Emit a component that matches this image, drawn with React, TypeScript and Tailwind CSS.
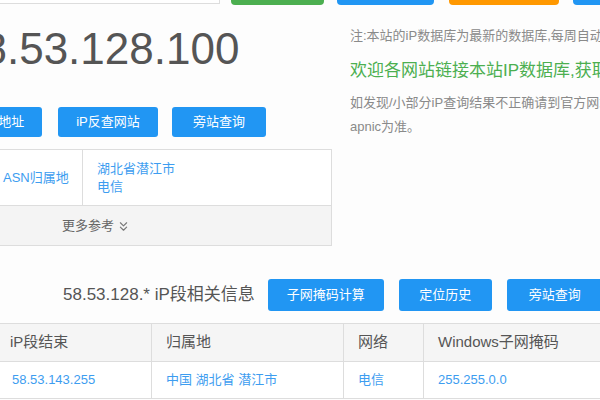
import { ChevronsDown } from "lucide-react";

const font = "font-['Liberation_Sans','Noto_Sans_CJK_SC',sans-serif]";

function Btn({ children, className = "" }: { children: React.ReactNode; className?: string }) {
  return (
    <div
      className={`flex items-center justify-center shrink-0 rounded-[3px] bg-[#2196f3] text-white text-[13px] whitespace-nowrap ${className}`}
    >
      {children}
    </div>
  );
}

export default function App() {
  const rows = [
    { end: "58.53.143.255", loc: "中国 湖北省 潜江市", net: "电信", mask: "255.255.0.0" },
  ];

  return (
    <div className={`w-[600px] h-[400px] overflow-hidden bg-[#fdfdfd] ${font}`}>
      {/* top bar remnants */}
      <div className="flex h-[5px] items-start">
        <div className="w-[220px] h-[4px] shrink-0 border-b border-r border-[#dddddd] bg-white" />
        <div className="ml-[11px] w-[93px] h-[5px] shrink-0 rounded-b-[4px] bg-[#4caf50]" />
        <div className="ml-[13px] w-[97px] h-[5px] shrink-0 rounded-b-[4px] bg-[#2196f3]" />
        <div className="ml-[15px] w-[110px] h-[5px] shrink-0 rounded-b-[4px] bg-[#ff9800]" />
        <div className="ml-[14px] w-[60px] h-[5px] shrink-0 rounded-bl-[4px] bg-[#2196f3]" />
      </div>

      <div className="flex">
        {/* left column */}
        <div className="w-[332px] shrink-0">
          <div className="mt-[22px] ml-[-42px] text-[44px] leading-[44px] text-[#555] whitespace-nowrap">
            58.53.128.100
          </div>

          <div className="mt-[36px] flex h-[30px]">
            <Btn className="ml-[-58px] w-[100px]">本机IP地址</Btn>
            <Btn className="ml-[16px] w-[100px]">iP反查网站</Btn>
            <Btn className="ml-[14px] w-[94px]">旁站查询</Btn>
          </div>

          <div className="mt-[12px] ml-[-139px] w-[471px] border border-[#dddddd] bg-white">
            <div className="flex h-[55px]">
              <div className="w-[221px] shrink-0 border-r border-[#dddddd] flex items-center pl-[141px] text-[13px] text-[#3d9df0] whitespace-nowrap">
                ASN归属地
              </div>
              <div className="flex flex-col justify-center pl-[14px] text-[13px] leading-[18px] text-[#3d9df0]">
                <span>湖北省潜江市</span>
                <span>电信</span>
              </div>
            </div>
            <div className="flex h-[40px] items-center justify-center gap-[2px] border-t border-[#dddddd] bg-[#f4f4f4] text-[13px] text-[#666]">
              <span>更多参考</span>
              <ChevronsDown size={15} strokeWidth={1.8} className="text-[#777] mt-[1px]" />
            </div>
          </div>
        </div>

        {/* right column */}
        <div className="ml-[18px] min-w-0 flex-1 whitespace-nowrap">
          <div className="mt-[22px] text-[13px] leading-[18px] text-[#8a8a8a]">
            注:本站的iP数据库为最新的数据库,每周自动更新
          </div>
          <div className="mt-[14px] text-[17px] leading-[24px] text-[#4caf50]">
            欢迎各网站链接本站IP数据库,获取免费数据接口
          </div>
          <div className="mt-[8px] text-[13px] leading-[24px] text-[#8a8a8a]">
            如发现/小部分iP查询结果不正确请到官方网站查询
          </div>
          <div className="text-[13px] leading-[24px] text-[#8a8a8a]">apnic为准。</div>
        </div>
      </div>

      {/* ip range section */}
      <div className="mt-[33px] flex h-[32px] items-center pl-[63px]">
        <div className="text-[17px] text-[#555] whitespace-nowrap">58.53.128.* iP段相关信息</div>
        <Btn className="ml-[13px] h-[32px] w-[116px]">子网掩码计算</Btn>
        <Btn className="ml-[15px] h-[32px] w-[93px]">定位历史</Btn>
        <Btn className="ml-[15px] h-[32px] w-[96px]">旁站查询</Btn>
      </div>

      <div className="mt-[12px] ml-[-3px] w-[620px] border-t border-[#dddddd]">
        <div className="flex h-[38px] border-b border-[#dddddd] bg-[#f5f5f5] text-[15px] text-[#555]">
          <div className="w-[155px] shrink-0 border-r border-[#dddddd] flex items-center pl-[13px]">iP段结束</div>
          <div className="w-[192px] shrink-0 border-r border-[#dddddd] flex items-center pl-[14px]">归属地</div>
          <div className="w-[80px] shrink-0 border-r border-[#dddddd] flex items-center pl-[14px]">网络</div>
          <div className="flex-1 flex items-center pl-[14px] whitespace-nowrap">Windows子网掩码</div>
        </div>
        {rows.map((r) => (
          <div key={r.end} className="flex h-[37px] border-b border-[#dddddd] bg-white text-[13px] text-[#3d9df0]">
            <div className="w-[155px] shrink-0 border-r border-[#dddddd] flex items-center pl-[15px]">{r.end}</div>
            <div className="w-[192px] shrink-0 border-r border-[#dddddd] flex items-center pl-[14px] whitespace-nowrap">{r.loc}</div>
            <div className="w-[80px] shrink-0 border-r border-[#dddddd] flex items-center pl-[14px]">{r.net}</div>
            <div className="flex-1 flex items-center pl-[14px]">{r.mask}</div>
          </div>
        ))}
      </div>
    </div>
  );
}
